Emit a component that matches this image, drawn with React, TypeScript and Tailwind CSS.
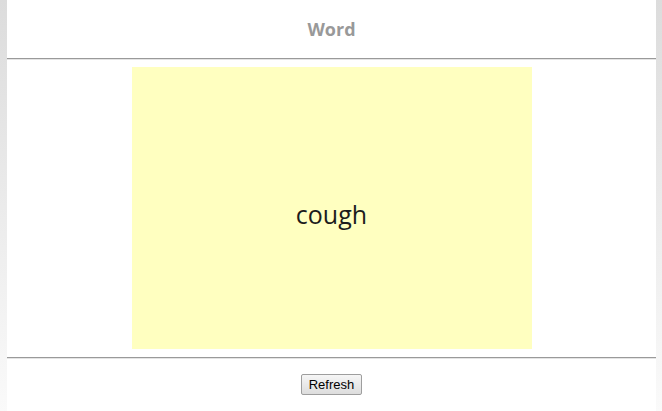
export default function App() {
  return (
    <div className="min-h-[411px] w-full bg-gradient-to-b from-[#dcdcdc] to-[#fafafa] px-[7px] pr-[6px]">
      <div className="flex min-h-[411px] flex-col bg-white">
        <div className="flex h-[58px] items-center justify-center">
          <h1 className="text-[18px] font-bold text-[#999999] [font-family:'Open_Sans',sans-serif]">
            Word
          </h1>
        </div>
        <div className="h-[2px] border-t border-t-[#9a9a9a] border-b border-b-[#e4e4e4]" />
        <div className="flex justify-center pt-[7px]">
          <div className="flex h-[282px] w-[400px] items-center justify-center bg-[#ffffc0] pt-[14px]">
            <span className="text-[25px] text-[#1c1c1c] [font-family:'Open_Sans',sans-serif]">
              cough
            </span>
          </div>
        </div>
        <div className="mt-[8px] h-[2px] border-t border-t-[#9a9a9a] border-b border-b-[#e4e4e4]" />
        <div className="flex justify-center pt-[15px]">
          <button className="h-[21px] rounded-[2px] border border-[#9e9e9e] bg-gradient-to-b from-[#f6f6f6] to-[#dddddd] px-[7px] text-[13px] leading-none text-black [font-family:'Liberation_Sans',Arial,sans-serif]">
            Refresh
          </button>
        </div>
      </div>
    </div>
  );
}
